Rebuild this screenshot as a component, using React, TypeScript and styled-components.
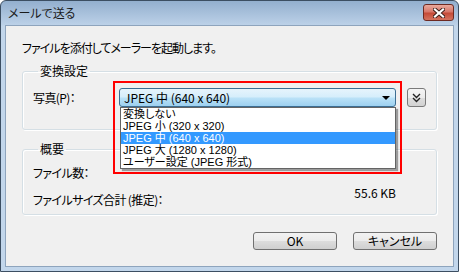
import React from "react";
import styled, { createGlobalStyle } from "styled-components";

const GlobalStyle = createGlobalStyle`
  html, body {
    margin: 0;
    padding: 0;
    background: #ffffff;
  }
  body {
    font-family: "Noto Sans CJK JP", "Liberation Sans", sans-serif;
    font-size: 12px;
    color: #000000;
    font-feature-settings: "palt";
  }
  * {
    box-sizing: border-box;
  }
`;

const Window = styled.div`
  width: 459px;
  height: 272px;
  display: flex;
  flex-direction: column;
  border: 1px solid #3c4e62;
  border-radius: 6px 6px 0 0;
  background: linear-gradient(#93afce 0px, #bcd1e8 24px, #c2d6eb 25px, #c2d6eb 100%);
  overflow: hidden;
`;

const TitleBar = styled.div`
  height: 24px;
  flex-shrink: 0;
  display: flex;
  align-items: center;
  justify-content: space-between;
  padding: 0 4px 0 7px;
`;

const Title = styled.div`
  line-height: 16px;
  color: #1a1a1a;
`;

const CloseButton = styled.div`
  width: 31px;
  height: 17px;
  align-self: flex-start;
  margin-top: 3px;
  border: 1px solid #6d2a22;
  border-radius: 3px;
  background: linear-gradient(#eaa99c 0%, #d7776a 45%, #c54b38 55%, #d4735f 100%);
  display: flex;
  align-items: center;
  justify-content: center;
`;

const Client = styled.div`
  flex: 1;
  margin: 0 4px 4px 4px;
  background: #f0f0f0;
  border: 1px solid #8ea4bd;
  display: flex;
  flex-direction: column;
  padding: 14px 16px 14px 16px;
`;

const Intro = styled.div`
  line-height: 16px;
  margin-bottom: 8px;
  letter-spacing: -1px;
`;

const GroupBox = styled.fieldset<{ $pad: string; $mt?: number }>`
  margin: ${(p) => p.$mt ?? 0}px 0 0 0;
  padding: ${(p) => p.$pad};
  border: 1px solid #d5dfe5;
  border-radius: 3px;
  box-shadow: inset 1px 1px 0 #ffffff, 1px 1px 0 #ffffff;
  min-width: 0;
`;

const Legend = styled.legend`
  padding: 0 2px;
  margin-left: 5px;
  line-height: 14px;
`;

const PhotoRow = styled.div`
  display: flex;
  align-items: center;
  height: 19px;
`;

const FieldLabel = styled.div<{ $w?: number }>`
  width: ${(p) => (p.$w ? `${p.$w}px` : "auto")};
  line-height: 16px;
  white-space: nowrap;
  letter-spacing: -0.6px;
`;

const ComboWrap = styled.div`
  position: relative;
  width: 277px;
  height: 19px;
`;

const Combo = styled.div`
  height: 19px;
  border: 1px solid #3c6e93;
  border-radius: 3px;
  background: linear-gradient(#e6f4fc 0%, #d6eefb 45%, #b9e1f7 55%, #9dd0ef 100%);
  display: flex;
  align-items: center;
  justify-content: space-between;
  padding: 0 5px 0 4px;
  line-height: 16px;
`;

const Arrow = styled.div`
  width: 0;
  height: 0;
  border-left: 4px solid transparent;
  border-right: 4px solid transparent;
  border-top: 4px solid #000000;
`;

const DropList = styled.div`
  position: absolute;
  top: 100%;
  left: 1px;
  right: 0;
  background: #ffffff;
  border: 1px solid #646464;
  box-shadow: 2px 2px 1px rgba(0, 0, 0, 0.35);
  z-index: 2;
`;

const ListItem = styled.div<{ $selected?: boolean }>`
  height: 12px;
  line-height: 12px;
  font-family: "Liberation Sans", "Noto Sans CJK JP", sans-serif;
  font-size: 11px;
  padding-left: 2px;
  white-space: nowrap;
  background: ${(p) => (p.$selected ? "#3399ff" : "transparent")};
  color: ${(p) => (p.$selected ? "#ffffff" : "#000000")};
`;

const RedBox = styled.div`
  position: absolute;
  left: -6px;
  top: -7px;
  width: 289px;
  height: 93px;
  border: 2px solid #ff0000;
  pointer-events: none;
  z-index: 3;
`;

const SmallButton = styled.div`
  width: 19px;
  height: 19px;
  margin-left: 11px;
  border: 1px solid #7a7a7a;
  border-radius: 3px;
  background: linear-gradient(#f4f4f4 0%, #ececec 50%, #dedede 51%, #d2d2d2 100%);
  display: flex;
  align-items: center;
  justify-content: center;
`;

const SummaryGrid = styled.div`
  display: grid;
  grid-template-columns: 1fr auto;
  row-gap: 11px;
  line-height: 16px;
`;

const Value = styled.div<{ $raise?: number }>`
  text-align: right;
  margin-top: ${(p) => -(p.$raise ?? 0)}px;
`;

const ButtonRow = styled.div`
  display: flex;
  justify-content: flex-end;
  gap: 16px;
  margin-top: 17px;
`;

const DialogButton = styled.div`
  width: 84px;
  height: 18px;
  border: 1px solid #707070;
  border-radius: 3px;
  background: linear-gradient(#f2f2f2 0%, #ebebeb 50%, #dddddd 51%, #cfcfcf 100%);
  display: flex;
  align-items: center;
  justify-content: center;
  line-height: 16px;
`;

const sizes = [
  "変換しない",
  "JPEG 小 (320 x 320)",
  "JPEG 中 (640 x 640)",
  "JPEG 大 (1280 x 1280)",
  "ユーザー設定 (JPEG 形式)",
];

export default function App() {
  return (
    <>
      <GlobalStyle />
      <Window>
        <TitleBar>
          <Title>メールで送る</Title>
          <CloseButton>
            <svg width="12" height="10" viewBox="0 0 12 10">
              <path d="M2 1.5 L10 8.5 M10 1.5 L2 8.5" stroke="#3b1e18" strokeWidth="4" strokeLinecap="square" />
              <path d="M2 1.5 L10 8.5 M10 1.5 L2 8.5" stroke="#ffffff" strokeWidth="2.2" strokeLinecap="square" />
            </svg>
          </CloseButton>
        </TitleBar>
        <Client>
          <Intro>ファイルを添付してメーラーを起動します。</Intro>
          <GroupBox $pad="10px 10px 22px 10px">
            <Legend>変換設定</Legend>
            <PhotoRow>
              <FieldLabel $w={86}>写真(P)：</FieldLabel>
              <ComboWrap>
                <Combo>
                  <span>JPEG 中 (640 x 640)</span>
                  <Arrow />
                </Combo>
                <DropList>
                  {sizes.map((s, i) => (
                    <ListItem key={s} $selected={i === 2}>
                      {s}
                    </ListItem>
                  ))}
                </DropList>
                <RedBox />
              </ComboWrap>
              <SmallButton>
                <svg width="9" height="10" viewBox="0 0 9 10">
                  <polyline points="1,1 4.5,4.5 8,1" fill="none" stroke="#222" strokeWidth="1.4" />
                  <polyline points="1,5 4.5,8.5 8,5" fill="none" stroke="#222" strokeWidth="1.4" />
                </svg>
              </SmallButton>
            </PhotoRow>
          </GroupBox>
          <GroupBox $pad="9px 40px 6px 10px" $mt={12}>
            <Legend>概要</Legend>
            <SummaryGrid>
              <FieldLabel>ファイル数：</FieldLabel>
              <Value />
              <FieldLabel>ファイルサイズ合計 (推定)：</FieldLabel>
              <Value $raise={7}>55.6 KB</Value>
            </SummaryGrid>
          </GroupBox>
          <ButtonRow>
            <DialogButton>OK</DialogButton>
            <DialogButton>キャンセル</DialogButton>
          </ButtonRow>
        </Client>
      </Window>
    </>
  );
}
